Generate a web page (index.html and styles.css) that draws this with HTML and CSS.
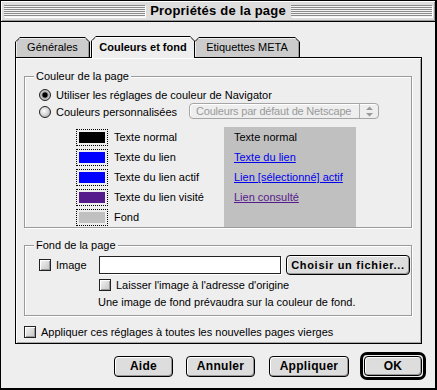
FILE: index.html
```html
<!DOCTYPE html>
<html lang="fr">
<head>
<meta charset="utf-8">
<title>Propriétés de la page</title>
<link rel="stylesheet" href="styles.css">
</head>
<body>
<div class="window">
  <div class="titlebar">
    <span class="stripes"></span>
    <span class="title">Propriétés de la page</span>
    <span class="stripes"></span>
  </div>

  <div class="content">
    <div class="tabs">
      <div class="tab tab-general"><span class="tab-in">Générales</span></div>
      <div class="tab tab-colors active"><span class="tab-in">Couleurs et fond</span></div>
      <div class="tab tab-meta"><span class="tab-in">Etiquettes META</span></div>
    </div>

    <div class="panel">
      <fieldset class="group group-colors">
        <legend>Couleur de la page</legend>
        <div class="row row-first">
          <span class="radio checked"></span>
          <span>Utiliser les réglages de couleur de Navigator</span>
        </div>
        <div class="row row-second">
          <span class="radio"></span>
          <span class="custom-label">Couleurs personnalisées</span>
          <div class="popup">
            <span class="popup-text">Couleurs par défaut de Netscape</span>
            <span class="popup-arrows">
              <svg width="9" height="11" viewBox="0 0 9 11"><path d="M4.5 0.5 L8 4 L1 4 Z M1 7 L8 7 L4.5 10.5 Z" fill="#9a9a9a"/></svg>
            </span>
          </div>
        </div>

        <div class="colors">
          <ul class="swatches">
            <li><span class="swatch"><i class="fill-text"></i></span>Texte normal</li>
            <li><span class="swatch"><i class="fill-link"></i></span>Texte du lien</li>
            <li><span class="swatch"><i class="fill-active"></i></span>Texte du lien actif</li>
            <li><span class="swatch"><i class="fill-visited"></i></span>Texte du lien visité</li>
            <li><span class="swatch"><i class="fill-bg"></i></span>Fond</li>
          </ul>
          <div class="preview">
            <div>Texte normal</div>
            <div><a class="link">Texte du lien</a></div>
            <div><a class="link">Lien [sélectionné] actif</a></div>
            <div><a class="link visited">Lien consulté</a></div>
          </div>
        </div>
      </fieldset>

      <fieldset class="group group-bg">
        <legend>Fond de la page</legend>
        <div class="row row-image">
          <span class="check"></span>
          <span class="image-label">Image</span>
          <span class="field"></span>
          <span class="btn btn-file">Choisir un fichier...</span>
        </div>
        <div class="row row-keep">
          <span class="check"></span>
          <span>Laisser l'image à l'adresse d'origine</span>
        </div>
        <div class="note">Une image de fond prévaudra sur la couleur de fond.</div>
      </fieldset>

      <div class="row row-apply">
        <span class="check"></span>
        <span>Appliquer ces réglages à toutes les nouvelles pages vierges</span>
      </div>
    </div>

    <div class="buttons">
      <span class="btn btn-help">Aide</span>
      <span class="btn btn-cancel">Annuler</span>
      <span class="btn btn-apply">Appliquer</span>
      <span class="default-ring"><span class="btn btn-ok">OK</span></span>
    </div>
  </div>
</div>
</body>
</html>
```

FILE: styles.css
```css
html, body {
  margin: 0;
  padding: 0;
  background: #ffffff;
}

body {
  font-family: "Liberation Sans", Arial, sans-serif;
  font-size: 11px;
  color: #000;
}

.window {
  box-sizing: border-box;
  width: 437px;
  height: 390px;
  border: 1px solid #000;
  border-right-width: 2px;
  border-bottom-width: 2px;
  background: #eeeeee;
  display: flex;
  flex-direction: column;
}

/* title bar */
.titlebar {
  height: 20px;
  border-bottom: 1px solid #000;
  background: #dddddd;
  box-shadow: inset 1px 1px 0 #fff, inset -1px -1px 0 #999;
  display: flex;
  align-items: center;
  padding: 0 3px;
}

.stripes {
  flex: 1;
  height: 12px;
  background: repeating-linear-gradient(to bottom, #8a8a8a 0 1px, #f4f4f4 1px 2px);
  box-shadow: 1px 1px 0 #fff;
}

.title {
  font-weight: bold;
  font-size: 13px;
  letter-spacing: 0.2px;
  padding: 0 5px;
  line-height: 20px;
}

.content {
  flex: 1;
  padding: 15px 0 0 14px;
}

/* tabs */
.tabs {
  display: flex;
  align-items: flex-end;
  height: 20px;
}

.tab {
  position: relative;
  height: 20px;
  box-sizing: border-box;
  padding: 1px 1px 0 1px;
  background: #000;
  clip-path: polygon(0 100%, 0 5px, 5px 0, calc(100% - 5px) 0, 100% 5px, 100% 100%);
}

.tab-in {
  display: flex;
  align-items: center;
  justify-content: center;
  height: 100%;
  background: #cccccc;
  box-shadow: inset 1px 1px 0 #eeeeee, inset -1px 0 0 #999;
  clip-path: polygon(0 100%, 0 4px, 4px 0, calc(100% - 4px) 0, 100% 4px, 100% 100%);
  padding-bottom: 2px;
  box-sizing: border-box;
}

.tab-general { width: 75px; }
.tab-colors { width: 104px; margin-left: 1px; }
.tab-meta { width: 106px; margin-left: -1px; }

.tab.active {
  z-index: 1;
  height: 22px;
  margin-bottom: -1px;
}

.tab.active .tab-in {
  background: #eeeeee;
  box-shadow: inset 1px 1px 0 #fff;
  font-weight: bold;
  padding-bottom: 1px;
}

/* panel */
.panel {
  box-sizing: border-box;
  width: 407px;
  height: 287px;
  border: 1px solid #000;
  box-shadow: inset 1px 1px 0 #fff, inset -1px -1px 0 #aaa;
  padding: 12px 0 0 8px;
}

.group {
  margin: 0;
  padding: 0;
  width: 388px;
  box-sizing: border-box;
  border: 1px solid #9a9a9a;
  box-shadow: inset 1px 1px 0 #fff, 1px 1px 0 #fff;
  min-width: 0;
}

.group legend {
  margin-left: 9px;
  padding: 0 2px;
  line-height: 13px;
  background: #eeeeee;
}

.row {
  display: flex;
  align-items: center;
}

.row-first {
  height: 17px;
  margin-top: 3px;
  padding-left: 14px;
}

.row-second {
  height: 18px;
  padding-left: 14px;
}

.radio {
  box-sizing: border-box;
  width: 12px;
  height: 12px;
  border: 1px solid #222;
  border-radius: 50%;
  background: radial-gradient(circle at 40% 40%, #ffffff 0, #d8d8d8 45%, #999 100%);
  margin-right: 5px;
  flex: none;
}

.radio.checked {
  background: radial-gradient(circle, #000 0 2.2px, #777 2.8px, #cfcfcf 4px, #888 100%);
}

.custom-label {
  width: 133px;
}

.popup {
  box-sizing: border-box;
  width: 190px;
  height: 16px;
  align-self: flex-start;
  border: 1px solid #a5a5a5;
  border-radius: 4px;
  background: #eeeeee;
  box-shadow: inset 1px 1px 0 #fff;
  display: flex;
  align-items: center;
  color: #9a9a9a;
}

.popup-text {
  flex: 1;
  padding-left: 6px;
  letter-spacing: -0.2px;
  white-space: nowrap;
  overflow: hidden;
}

.popup-arrows {
  width: 18px;
  height: 100%;
  border-left: 1px solid #b0b0b0;
  display: flex;
  align-items: center;
  justify-content: center;
}

/* colours */
.colors {
  display: grid;
  grid-template-columns: 148px 132px;
  margin-top: 6px;
  padding-left: 51px;
}

.swatches {
  list-style: none;
  margin: 0;
  padding: 0;
}

.swatches li {
  height: 20px;
  display: flex;
  align-items: center;
}

.swatch {
  box-sizing: border-box;
  width: 32px;
  height: 17px;
  border: 1px dotted #000;
  padding: 2px;
  margin-right: 6px;
  display: flex;
}

.swatch i {
  flex: 1;
}

.fill-text { background: #000000; }
.fill-link { background: #0000ff; }
.fill-active { background: #0000ff; }
.fill-visited { background: #551a8b; }
.fill-bg { background: #c0c0c0; }

.preview {
  height: 100px;
  background: #c0c0c0;
  padding: 0 10px;
  line-height: 20px;
}

.link {
  color: #0000ee;
  text-decoration: underline;
}

.link.visited {
  color: #551a8b;
}

/* background group */
.group-bg {
  margin-top: 11px;
  padding-bottom: 6px;
}

.check {
  box-sizing: border-box;
  width: 12px;
  height: 12px;
  border: 1px solid #222;
  background: linear-gradient(135deg, #f4f4f4, #c4c4c4);
  box-shadow: inset 1px 1px 0 #fff, inset -1px -1px 0 #999;
  margin-right: 5px;
  flex: none;
}

.row-image {
  height: 20px;
  margin-top: 3px;
  padding-left: 14px;
}

.image-label {
  width: 43px;
}

.field {
  box-sizing: border-box;
  width: 182px;
  height: 18px;
  background: #fff;
  border: 1px solid #222;
  box-shadow: 1px 1px 0 #fff;
  margin-right: 5px;
}

.row-keep {
  height: 13px;
  margin-top: 3px;
  padding-left: 74px;
}

.note {
  margin-top: 5px;
  padding-left: 73px;
  line-height: 13px;
}

.row-apply {
  height: 13px;
  margin-top: 9px;
}

/* buttons */
.btn {
  box-sizing: border-box;
  display: inline-flex;
  align-items: center;
  justify-content: center;
  height: 20px;
  border: 1px solid #000;
  border-radius: 4px;
  background: #dddddd;
  box-shadow: inset 1px 1px 0 #fff, inset -1px -1px 0 #999;
  font-weight: bold;
  font-size: 12px;
  letter-spacing: 0.3px;
}

.btn-file {
  width: 124px;
  font-size: 11px;
  letter-spacing: 0.7px;
}

.buttons {
  display: flex;
  align-items: center;
  margin-top: 8px;
  padding-left: 99px;
}

.btn-help { width: 59px; height: 21px; }
.btn-cancel { width: 69px; height: 21px; margin-left: 13px; }
.btn-apply { width: 80px; height: 21px; margin-left: 14px; }

.default-ring {
  box-sizing: border-box;
  width: 66px;
  height: 28px;
  margin-left: 11px;
  border: 3px solid #000;
  border-radius: 7px;
  padding: 1px;
  display: flex;
}

.btn-ok {
  flex: 1;
  height: auto;
}
```
